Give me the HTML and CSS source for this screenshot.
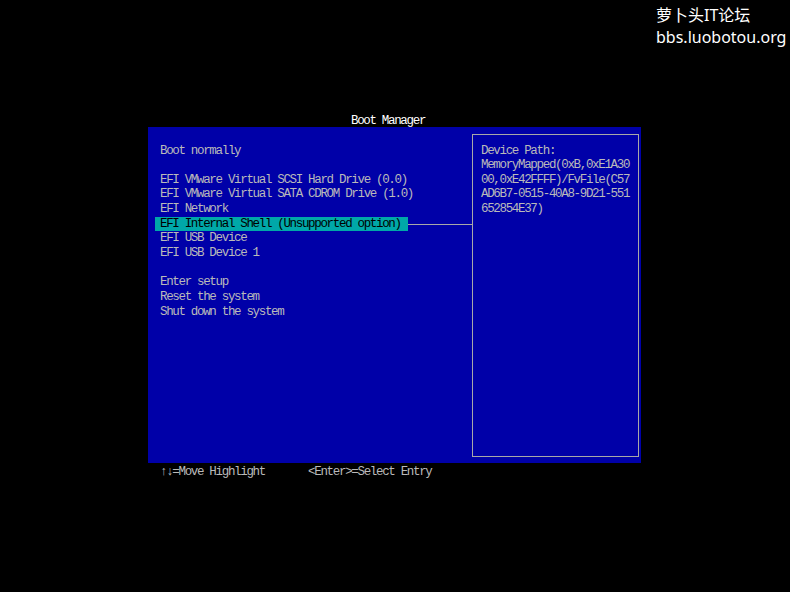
FILE: index.html
```html
<!DOCTYPE html>
<html lang="zh-CN">
<head>
    <meta charset="UTF-8">
    <meta name="viewport" content="width=device-width, initial-scale=1.0">
    <title>Boot Manager</title>
    <link rel="stylesheet" href="styles.css">
</head>
<body>
    <div class="watermark">
        <div>萝卜头IT论坛</div>
        <div>bbs.luobotou.org</div>
    </div>

    <div class="screen">
        <div class="title">Boot Manager</div>

        <div class="panel">
            <div class="menu">
                <div class="item">Boot normally</div>
                <div class="item blank"></div>
                <div class="item">EFI VMware Virtual SCSI Hard Drive (0.0)</div>
                <div class="item">EFI VMware Virtual SATA CDROM Drive (1.0)</div>
                <div class="item">EFI Network</div>
                <div class="item-row">
                    <span class="item selected">EFI Internal Shell (Unsupported option)</span>
                    <span class="connector"></span>
                </div>
                <div class="item">EFI USB Device</div>
                <div class="item">EFI USB Device 1</div>
                <div class="item blank"></div>
                <div class="item">Enter setup</div>
                <div class="item">Reset the system</div>
                <div class="item">Shut down the system</div>
            </div>

            <div class="help-box">
                <div class="line">Device Path:</div>
                <div class="line">MemoryMapped(0xB,0xE1A30</div>
                <div class="line">00,0xE42FFFF)/FvFile(C57</div>
                <div class="line">AD6B7-0515-40A8-9D21-551</div>
                <div class="line">652854E37)</div>
            </div>
        </div>

        <div class="footer">↑↓=Move Highlight       &lt;Enter&gt;=Select Entry</div>
    </div>
</body>
</html>
```

FILE: styles.css
```css
body {
    margin: 0;
    background-color: #000;
    width: 790px;
    height: 592px;
    overflow: hidden;
}
.watermark {
    position: absolute;
    top: 4px;
    left: 656px;
    color: #fff;
    font-family: "Noto Sans", "Noto Sans CJK SC", sans-serif;
    font-size: 16px;
    line-height: 22px;
}
.screen {
    padding-top: 114px;
    font-family: "Liberation Mono", "DejaVu Sans Mono", monospace;
    font-size: 12.5px;
    letter-spacing: -1.33px;
    line-height: 14.65px;
}
.title,
.item,
.line,
.footer {
    white-space: pre;
}
.title {
    margin-left: 351px;
    height: 13px;
    color: #fff;
}
.panel {
    margin-left: 148px;
    width: 493px;
    height: 336px;
    background-color: #0000a8;
    display: flex;
}
.menu {
    width: 324px;
    padding: 16.5px 0 0 7px;
    box-sizing: border-box;
}
.item {
    color: #bababa;
    padding-left: 5px;
    height: 14.65px;
}
.item-row {
    display: flex;
    align-items: center;
}
.item.selected {
    background-color: #00a8a8;
    color: #000;
    padding-right: 7px;
}
.connector {
    flex: 1;
    height: 1px;
    background-color: #a8a8a8;
}
.help-box {
    margin-top: 7px;
    width: 167px;
    height: 323px;
    border: 1px solid #a8a8a8;
    box-sizing: border-box;
    padding: 8.5px 0 0 8px;
    color: #bababa;
}
.line {
    height: 14.65px;
}
.footer {
    margin: 2px 0 0 160px;
    color: #bababa;
}
```
